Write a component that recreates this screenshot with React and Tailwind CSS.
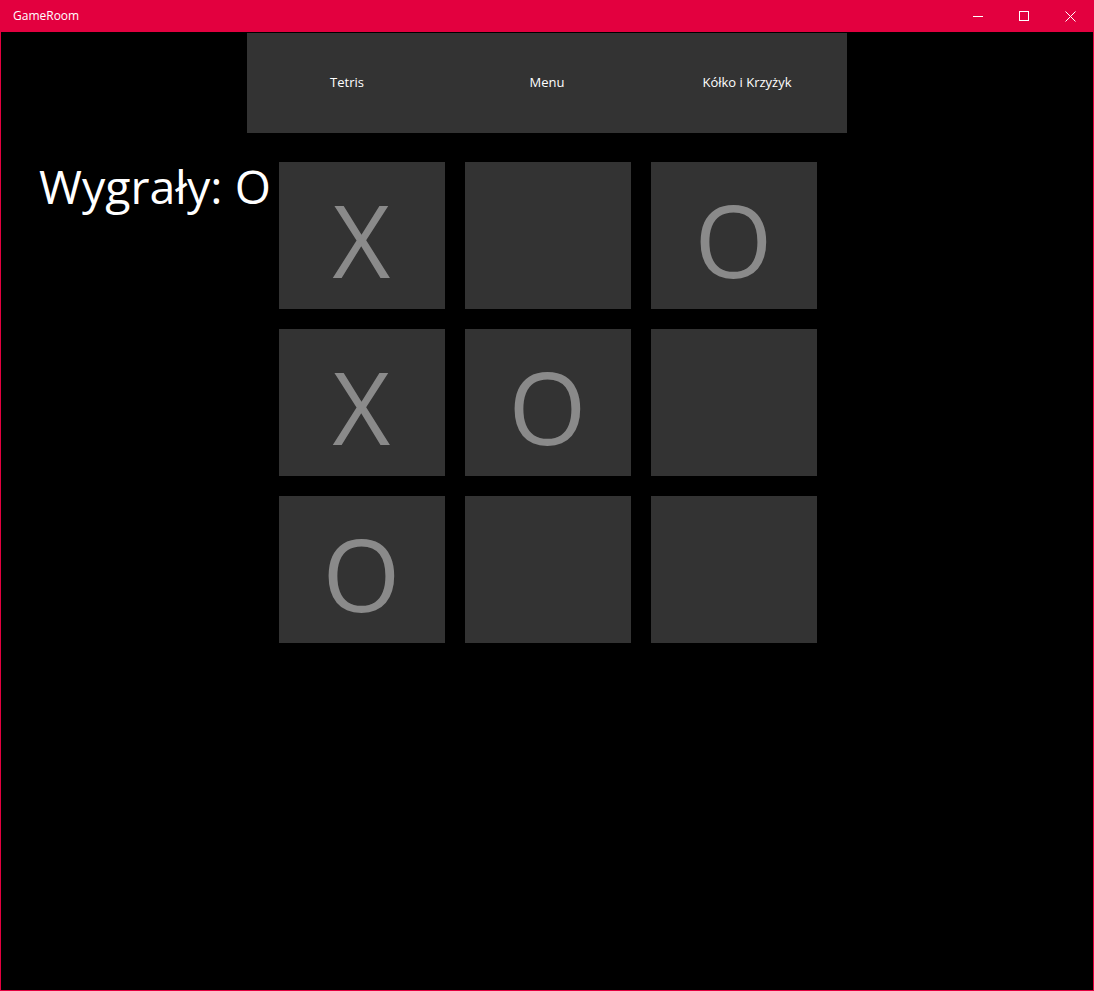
import React from "react";

const board = ["X", "", "O", "X", "O", "", "O", "", ""];

export default function App() {
  return (
    <div
      className="w-[1094px] h-[991px] flex flex-col bg-[#e3003f] px-px pb-px overflow-hidden"
      style={{ fontFamily: '"Open Sans", "Noto Sans", sans-serif' }}
    >
      {/* title bar */}
      <div className="h-[32px] flex items-center shrink-0 text-white">
        <div className="pl-[12px] text-[12px] leading-none flex-1">GameRoom</div>
        <div className="flex h-full">
          <div className="w-[46px] h-full flex items-center justify-center">
            <svg width="10" height="10" viewBox="0 0 10 10">
              <line x1="0" y1="5.5" x2="10" y2="5.5" stroke="white" strokeWidth="1" />
            </svg>
          </div>
          <div className="w-[46px] h-full flex items-center justify-center">
            <svg width="10" height="10" viewBox="0 0 10 10">
              <rect x="0.5" y="0.5" width="9" height="9" fill="none" stroke="white" strokeWidth="1" />
            </svg>
          </div>
          <div className="w-[46px] h-full flex items-center justify-center">
            <svg width="11" height="11" viewBox="0 0 11 11">
              <path d="M0.5 0.5 L10.5 10.5 M10.5 0.5 L0.5 10.5" stroke="white" strokeWidth="1" />
            </svg>
          </div>
        </div>
      </div>

      {/* content */}
      <div className="flex-1 bg-black flex flex-col items-center pt-px">
        <nav className="w-[600px] h-[100px] bg-[#333333] grid grid-cols-3 text-white text-[13px] pb-px">
          <div className="flex items-center justify-center">Tetris</div>
          <div className="flex items-center justify-center">Menu</div>
          <div className="flex items-center justify-center">Kółko i Krzyżyk</div>
        </nav>

        <div className="w-full grid grid-cols-[1fr_auto_1fr] mt-[29px]">
          <div className="pl-[38px] text-white text-[46.5px] leading-[48px] whitespace-nowrap">
            Wygrały: O
          </div>
          <div className="grid grid-cols-[166px_166px_166px] grid-rows-[147px_147px_147px] gap-[20px] ml-px">
            {board.map((v, i) => (
              <div
                key={i}
                className="bg-[#333333] flex items-center justify-center text-[#8a8a8a] text-[100px] leading-none pt-[6px]"
              >
                {v}
              </div>
            ))}
          </div>
          <div />
        </div>
      </div>
    </div>
  );
}
